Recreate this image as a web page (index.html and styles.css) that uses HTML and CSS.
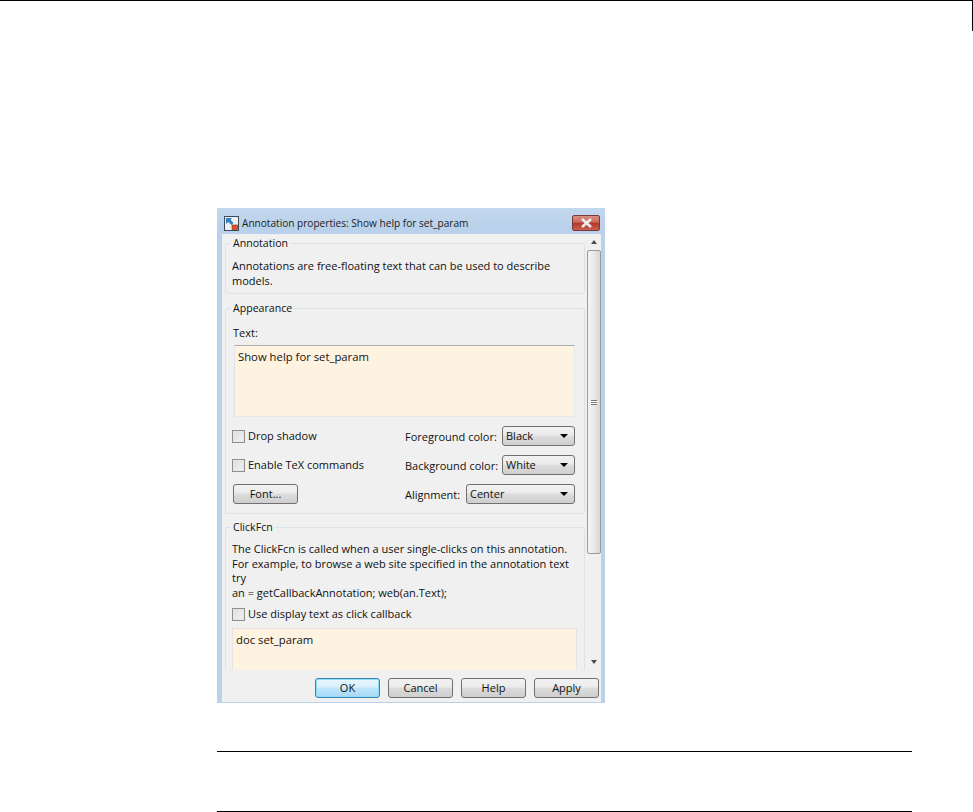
FILE: index.html
```html
<!DOCTYPE html>
<html lang="en">
<head>
<meta charset="utf-8">
<title>Annotation properties</title>
<link rel="stylesheet" href="styles.css">
</head>
<body>
<div class="page-top"></div>
<main class="window">
  <div class="titlebar">
    <svg class="app-icon" width="15" height="15" viewBox="0 0 15 15">
      <rect x="0.5" y="0.5" width="14" height="14" fill="#eef2f6" stroke="#3c4a57"/>
      <path d="M2 2h6L6.5 3.8 9.5 7 7.5 9 4.3 6 2 8z" fill="#2f7fc1"/>
      <rect x="8" y="9" width="5.5" height="4.5" fill="#d8502c" stroke="#8c2f16" stroke-width=".6"/>
    </svg>
    <span class="title-text">Annotation properties: Show help for set_param</span>
    <div class="close-btn"><svg width="13" height="10" viewBox="0 0 13 10"><path d="M2 1l9 8M11 1l-9 8" stroke="#eee" stroke-width="2.6"/></svg></div>
  </div>
  <div class="client">
    <div class="scroll-area">
      <div class="panels">
        <fieldset class="group group-annotation">
          <legend>Annotation</legend>
          <p class="desc">Annotations are free-floating text that can be used to describe<br>models.</p>
        </fieldset>
        <fieldset class="group group-appearance">
          <legend>Appearance</legend>
          <div class="field-label">Text:</div>
          <div class="textbox textbox-text">Show help for set_param</div>
          <div class="form-row">
            <label class="check"><span class="box"></span>Drop shadow</label>
            <div class="prop"><span class="prop-label prop-label-color">Foreground color:</span><div class="select select-color"><span>Black</span><i class="caret"></i></div></div>
          </div>
          <div class="form-row">
            <label class="check"><span class="box"></span>Enable TeX commands</label>
            <div class="prop"><span class="prop-label prop-label-color">Background color:</span><div class="select select-color"><span>White</span><i class="caret"></i></div></div>
          </div>
          <div class="form-row">
            <div class="btn btn-font">Font...</div>
            <div class="prop"><span class="prop-label prop-label-align">Alignment:</span><div class="select select-align"><span>Center</span><i class="caret"></i></div></div>
          </div>
        </fieldset>
        <fieldset class="group group-click">
          <legend>ClickFcn</legend>
          <p class="desc desc-click">The ClickFcn is called when a user single-clicks on this annotation.<br>For example, to browse a web site specified in the annotation text<br>try<br>an = getCallbackAnnotation; web(an.Text);</p>
          <label class="check check-click"><span class="box"></span>Use display text as click callback</label>
          <div class="textbox textbox-click">doc set_param</div>
        </fieldset>
      </div>
      <div class="scrollbar">
        <i class="arrow arrow-up"></i>
        <div class="thumb"><span class="grip"></span></div>
        <i class="arrow arrow-down"></i>
      </div>
    </div>
    <div class="actions">
      <div class="btn btn-default">OK</div>
      <div class="btn">Cancel</div>
      <div class="btn">Help</div>
      <div class="btn">Apply</div>
    </div>
  </div>
</main>
<div class="rule rule-first"></div>
<div class="rule rule-second"></div>
</body>
</html>
```
FILE: styles.css
```css
* { box-sizing: border-box; }
html, body { margin: 0; padding: 0; }
body {
  height: 812px;
  overflow: hidden;
  background: #fff;
  font-family: "Open Sans", "Noto Sans", sans-serif;
  font-size: 11px;
  color: #111;
}
.page-top {
  height: 31px;
  border-top: 1px solid #000;
  border-right: 1px solid #000;
}
.window {
  width: 388px;
  height: 495px;
  margin: 177px 0 0 217px;
  padding: 0 4px 1px 5px;
  background: linear-gradient(#c3d8ee, #b9d1ea 20px);
  display: flex;
  flex-direction: column;
}
.titlebar {
  height: 26px;
  flex: none;
  display: flex;
  align-items: center;
  padding: 4px 1px 0 2px;
}
.app-icon { flex: none; }
.title-text { margin-left: 3px; flex: 1; color: #222; font-size: 10.1px; }
.close-btn {
  width: 28px;
  height: 16px;
  border: 1px solid #7a3a3a;
  border-radius: 2px;
  background: linear-gradient(#d98f82, #c9685a 45%, #b3382a 50%, #c8604f);
  display: flex;
  align-items: center;
  justify-content: center;
}
.client {
  flex: 1;
  background: #f0f0f0;
  display: flex;
  flex-direction: column;
  min-height: 0;
}
.scroll-area {
  height: 436px;
  flex: none;
  display: flex;
  overflow: hidden;
}
.panels {
  width: 365px;
  flex: none;
  padding: 2px 0 0 3px;
}
.group {
  width: 360px;
  margin: 0;
  padding: 0 6px;
  border: 1px solid #dce2e8;
  border-radius: 3px;
  min-inline-size: 0;
}
.group legend {
  height: 14px;
  line-height: 14px;
  padding: 0 2px;
  margin-left: -1px;
  font-size: 10.6px;
}
.group-annotation { height: 58px; }
.group-appearance { height: 213px; margin-top: 7px; }
.group-click { height: 200px; margin-top: 6px; }
.desc {
  margin: 9px 0 0;
  line-height: 14.5px;
  white-space: nowrap;
}
.desc-click { margin-top: 8px; }
.field-label {
  margin: 11px 0 0 1px;
  height: 14px;
  line-height: 14px;
}
.textbox {
  background: #fef3e0;
  padding: 4px 3px;
  line-height: 14px;
  font-size: 11.3px;
}
.textbox-text {
  margin: 5px 2px 0;
  width: 341px;
  height: 72px;
  border: 1px solid;
  border-color: #abadb3 #e3e9ef #e3e9ef #e2e3ea;
}
.textbox-click {
  margin-top: 7px;
  width: 345px;
  height: 60px;
  border: 1px solid #e4e4e0;
}
.form-row {
  height: 20px;
  margin-top: 9px;
  display: flex;
  align-items: center;
  justify-content: space-between;
  padding-right: 3px;
}
.check {
  display: flex;
  align-items: center;
  height: 14px;
  line-height: 14px;
}
.box {
  width: 13px;
  height: 13px;
  margin-right: 3px;
  border: 1px solid #8e8f8f;
  background: linear-gradient(135deg, #dcdcdc, #f4f4f4);
  box-shadow: inset 0 0 0 1px #e6e6e6;
}
.check-click { margin-top: 7px; }
.prop {
  display: flex;
  align-items: center;
}
.prop-label { white-space: nowrap; }
.prop-label-color { width: 97px; }
.prop-label-align { width: 61px; }
.select {
  height: 20px;
  border: 1px solid #707070;
  border-radius: 3px;
  background: linear-gradient(#f2f2f2, #ebebeb 45%, #dcdcdc 50%, #cfcfcf);
  padding: 0 6px 1px 3px;
  display: flex;
  align-items: center;
  justify-content: space-between;
}
.select-color { width: 73px; }
.select-align { width: 109px; }
.caret {
  width: 0;
  height: 0;
  border-left: 4px solid transparent;
  border-right: 4px solid transparent;
  border-top: 4px solid #000;
}
.btn {
  width: 65px;
  height: 20px;
  padding-bottom: 1px;
  border: 1px solid #707070;
  border-radius: 3px;
  background: linear-gradient(#f2f2f2, #ebebeb 45%, #dcdcdc 50%, #cfcfcf);
  display: flex;
  align-items: center;
  justify-content: center;
}
.btn-font { margin-left: 1px; }
.btn-default {
  border-color: #3c7fb1;
  box-shadow: inset 0 0 0 1px #8fe0f5;
  background: linear-gradient(#eaf6fd, #d9f0fc 45%, #bee6fd 50%, #a7d9f5);
}
.scrollbar {
  width: 14px;
  margin-left: 0;
  flex: none;
  display: flex;
  flex-direction: column;
  align-items: center;
  background: #f0f0f0;
}
.arrow {
  width: 0;
  height: 0;
  flex: none;
  border-left: 3.5px solid transparent;
  border-right: 3.5px solid transparent;
}
.arrow-up { margin-top: 6px; border-bottom: 4px solid #4d4d4d; }
.arrow-down { margin-top: 106px; border-top: 4px solid #4d4d4d; }
.thumb {
  width: 14px;
  height: 304px;
  margin-top: 6px;
  flex: none;
  border: 1px solid #9a9a9a;
  border-radius: 2px;
  background: linear-gradient(90deg, #f5f5f5, #e9e9e9 50%, #d6d6d6);
  display: flex;
  align-items: center;
  justify-content: center;
}
.grip {
  width: 6px;
  height: 5px;
  border-top: 1px solid #777;
  border-bottom: 1px solid #777;
  background: linear-gradient(#fff 1px, #777 1px, #777 2px, #fff 2px);
}
.actions {
  flex: 1;
  display: flex;
  justify-content: flex-end;
  align-items: flex-start;
  gap: 8px;
  padding: 8px 2px 0 0;
}
.rule { margin-left: 217px; width: 695px; border-top: 1px solid #000; }
.rule-first { margin-top: 48px; }
.rule-second { margin-top: 59px; }
```
